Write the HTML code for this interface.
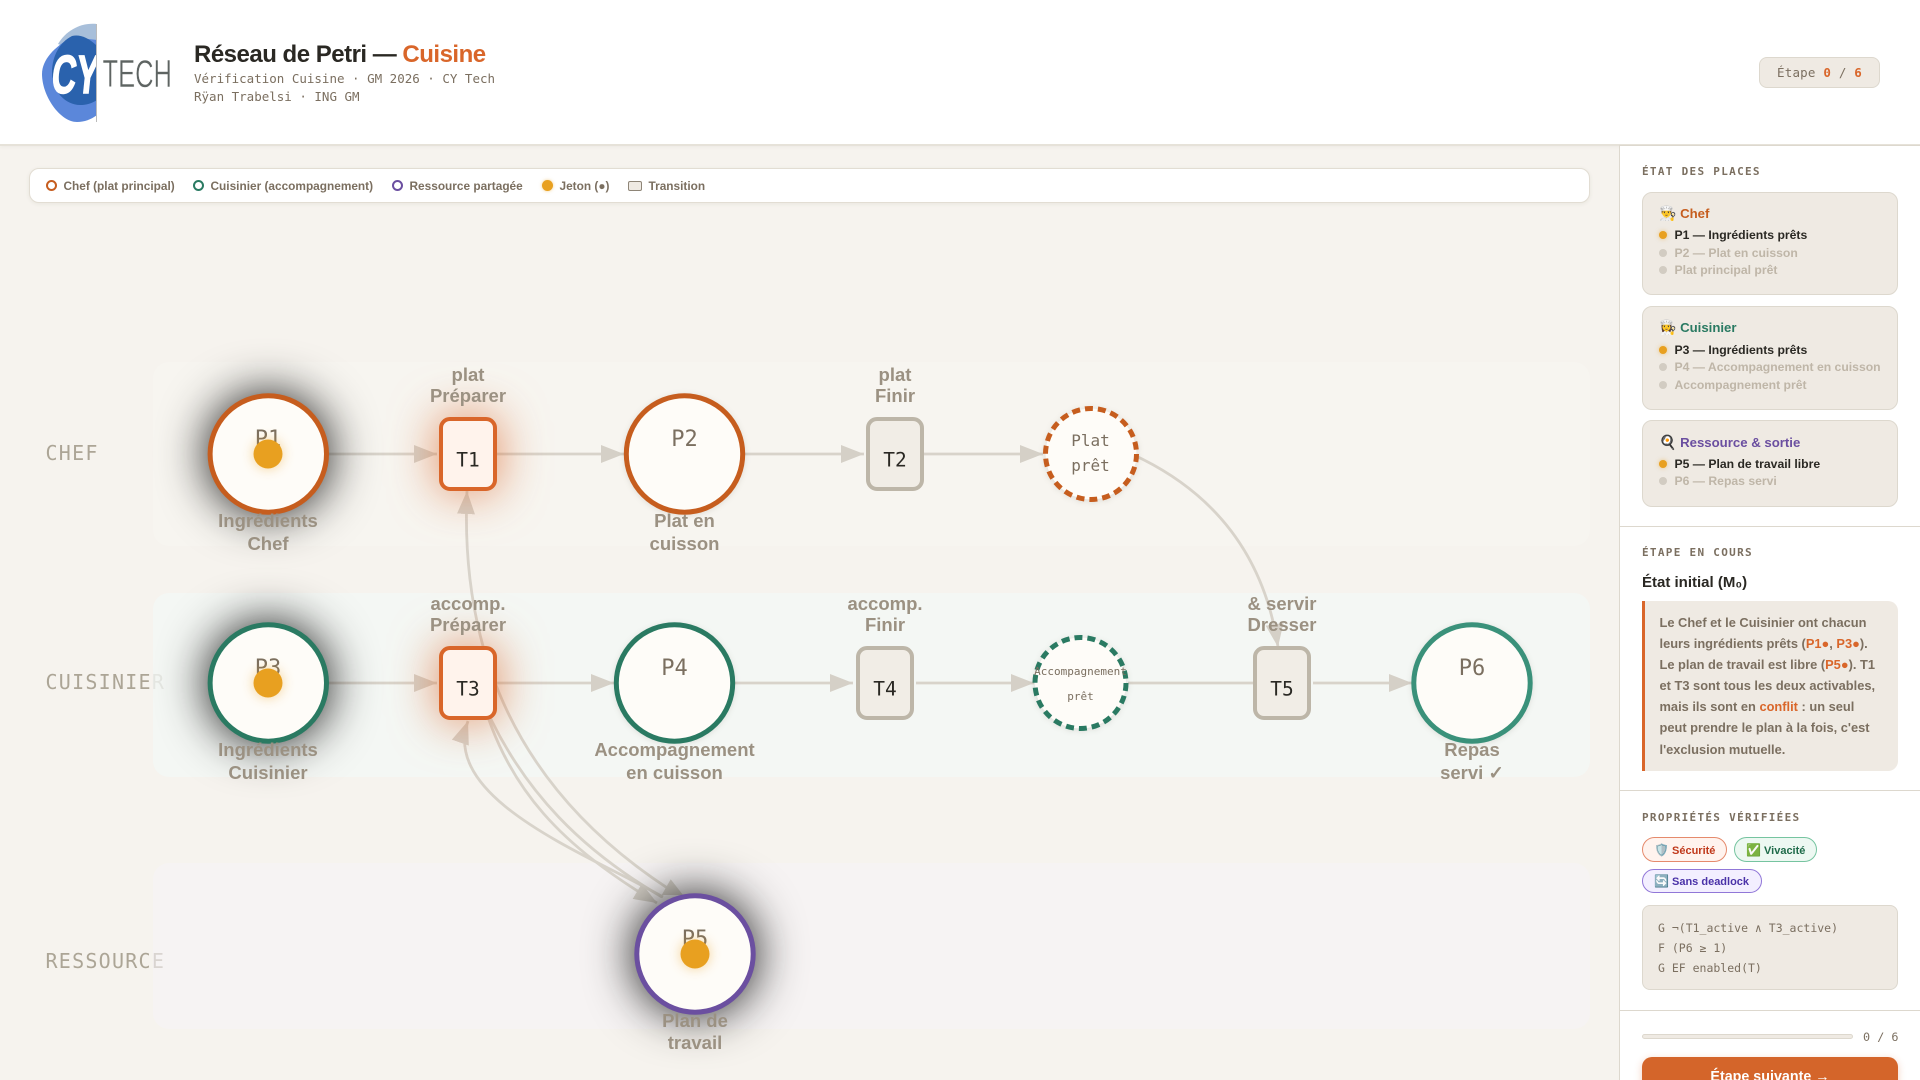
<!DOCTYPE html>
<html lang="fr"><head><meta charset="utf-8"><title>Réseau de Petri — Cuisine</title>
<style>
*{box-sizing:border-box;margin:0;padding:0}
html,body{width:1920px;height:1080px;overflow:hidden;background:#f6f3ee;font-family:"Liberation Sans",sans-serif}
#root{position:relative;width:1920px;height:1080px;overflow:hidden}
.a{position:absolute;white-space:nowrap}
.m{font-family:"DejaVu Sans Mono","Liberation Mono",monospace}
#hd{left:0;top:0;width:1920px;height:146px;background:#fff;border-bottom:2px solid #e6e2d9;box-shadow:0 1px 4px rgba(60,50,30,.05)}
#sb{left:1619px;top:145px;width:301px;height:935px;background:#fff;border-left:1px solid #ddd8ce;border-top:1px solid #ddd8ce}
.h{left:1642px;font:bold 11px "DejaVu Sans Mono",monospace;letter-spacing:1.3px;color:#7b6f60;line-height:14px}
.card{left:1642px;width:256px;background:#efeae3;border:1px solid #ddd8ce;border-radius:10px}
.ct{left:1659px;font:bold 13.2px/16px "Liberation Sans",sans-serif}
.ct i{font-style:normal;font-size:14px}
.ro{left:1674.5px;font:bold 12.2px/14px "Liberation Sans",sans-serif;color:#2a2823}
.off{color:#bfb6a8}
.d{left:1659px;width:8px;height:8px;border-radius:50%;background:#e8a020;box-shadow:0 0 4px rgba(232,160,32,.5)}
.d.o{background:#d2ccc2;box-shadow:none}
.ln{left:1620px;width:300px;height:1px;background:#ddd8ce}
.pill{height:25px;border-radius:13px;border:1px solid;font:bold 11px/25px "Liberation Sans",sans-serif;padding-left:11px}
.pill i{font-style:normal;font-size:12px}
b.o{color:#d9662a}
.lg{top:179px;font:bold 11.85px/14px "Liberation Sans",sans-serif;color:#7b6f60}
.rg{top:180px;width:11px;height:11px;border-radius:50%;border:2px solid}
text{white-space:pre}
.lb{font:bold 18.5px "Liberation Sans",sans-serif;fill:#9b9182;text-anchor:middle}
.pn{font:22px "DejaVu Sans Mono",monospace;fill:#7b6f60;text-anchor:middle}
.tn{font:19.5px "DejaVu Sans Mono",monospace;fill:#2a2823;text-anchor:middle}
.rl{font:20px "DejaVu Sans Mono",monospace;fill:#aca596;letter-spacing:1.25px}
.ar{fill:none;stroke:#d8d3ca;stroke-width:2.8}
.hd{fill:#d5d0c7}
.pl{fill:#fefcf8}
.tk{fill:#e8a020;filter:drop-shadow(0 0 6px rgba(232,160,32,.45))}
.gd{filter:drop-shadow(0 0 24px rgba(20,20,20,1))}
.gt{filter:drop-shadow(0 0 24px rgba(217,102,42,.75))}
.sf{filter:drop-shadow(0 1px 3px rgba(60,50,30,.12))}
</style></head><body><div id="root">

<svg class="a" style="left:0;top:147px" width="1619" height="933" viewBox="0 147 1619 933">
<defs><marker id="h" markerUnits="userSpaceOnUse" markerWidth="24" markerHeight="20" refX="23" refY="9" orient="auto"><path class="hd" d="M0,0L23,9L0,18Z"/></marker></defs>
<text class="rl" x="45.5" y="460">CHEF</text>
<text class="rl" x="45.5" y="689">CUISINIER</text>
<text class="rl" x="45.5" y="968">RESSOURCE</text>
<rect x="153" y="362" width="1437" height="184" rx="16" fill="#f8f5f1" opacity=".7"/>
<rect x="153" y="593" width="1437" height="184" rx="16" fill="#f4f7f5" opacity=".8"/>
<rect x="153" y="863" width="1437" height="166" rx="16" fill="#f6f3f6" opacity=".6"/>

<g class="ar">
<path d="M328,454H437" marker-end="url(#h)"/>
<path d="M497,454H624" marker-end="url(#h)"/>
<path d="M745,454H864" marker-end="url(#h)"/>
<path d="M924,454H1043" marker-end="url(#h)"/>
<path d="M1138,457Q1258,515 1278,647" marker-end="url(#h)"/>
<path d="M328,683H437" marker-end="url(#h)"/>
<path d="M497,683H614" marker-end="url(#h)"/>
<path d="M735,683H853" marker-end="url(#h)"/>
<path d="M916,683H1034" marker-end="url(#h)"/>
<path d="M1128,683H1254"/>
<path d="M1313,683H1412" marker-end="url(#h)"/>
<path d="M672,891C515,790 460,650 467,491" marker-end="url(#h)"/>
<path d="M663,897C590,855 440,800 468,721" marker-end="url(#h)"/>
<path d="M480,690C505,790 565,848 657,903" marker-end="url(#h)"/>
<path d="M478,690C520,795 590,855 662,897"/>
</g>
<path class="hd" d="M661.7,895L670.7,879.3L683,895Z"/>

<g class="gd"><circle class="pl" cx="268.3" cy="454" r="58.2" stroke="#c65d1e" stroke-width="5"/></g>
<g class="gd"><circle class="pl" cx="268.3" cy="683" r="58.2" stroke="#2a7a62" stroke-width="5"/></g>
<g class="gd"><circle class="pl" cx="695" cy="954" r="58.2" stroke="#6b4fa0" stroke-width="5"/></g>
<g class="sf">
<circle class="pl" cx="684.5" cy="454" r="58.2" stroke="#c65d1e" stroke-width="5"/>
<circle class="pl" cx="674.5" cy="683" r="58.2" stroke="#2a7a62" stroke-width="5"/>
<circle class="pl" cx="1472" cy="683" r="58.2" stroke="#3a917a" stroke-width="5"/>
<circle class="pl" cx="1091" cy="454" r="45.5" stroke="#c65d1e" stroke-width="5" stroke-dasharray="8 5"/>
<circle class="pl" cx="1080.5" cy="683" r="45.5" stroke="#2a7a62" stroke-width="5" stroke-dasharray="8 5"/>
</g>
<g class="gt"><rect x="441" y="419" width="54" height="70" rx="9" fill="#fff3ec" stroke="#d9662a" stroke-width="4"/></g>
<g class="gt"><rect x="441" y="648" width="54" height="70" rx="9" fill="#fff3ec" stroke="#d9662a" stroke-width="4"/></g>
<g fill="#f1ede6" stroke="#bdb6a8" stroke-width="4">
<rect x="868" y="419" width="54" height="70" rx="9"/>
<rect x="858" y="648" width="54" height="70" rx="9"/>
<rect x="1255" y="648" width="54" height="70" rx="9"/>
</g>

<text class="pn" x="268" y="446">P1</text>
<text class="pn" x="684.5" y="446">P2</text>
<text class="pn" x="268" y="675">P3</text>
<text class="pn" x="674.5" y="675">P4</text>
<text class="pn" x="1472" y="675">P6</text>
<text class="pn" x="695" y="946">P5</text>
<text class="tn" x="468" y="466.5">T1</text>
<text class="tn" x="895" y="466.5">T2</text>
<text class="tn" x="468" y="695.5">T3</text>
<text class="tn" x="885" y="695.5">T4</text>
<text class="tn" x="1282" y="695.5">T5</text>
<g font-family="DejaVu Sans Mono" fill="#7b6f60" text-anchor="middle">
<text x="1090.5" y="446" font-size="16">Plat</text><text x="1090.5" y="471" font-size="16">prêt</text>
<text x="1080.5" y="675" font-size="11">Accompagnement</text><text x="1080.5" y="700" font-size="11">prêt</text>
</g>
<circle class="tk" cx="268" cy="454" r="14.5"/>
<circle class="tk" cx="268" cy="683" r="14.5"/>
<circle class="tk" cx="695" cy="954" r="14.5"/>

<g class="lb">
<text x="268" y="527">Ingrédients</text><text x="268" y="550">Chef</text>
<text x="684.5" y="527">Plat en</text><text x="684.5" y="550">cuisson</text>
<text x="268" y="756">Ingrédients</text><text x="268" y="779">Cuisinier</text>
<text x="674.5" y="756">Accompagnement</text><text x="674.5" y="779">en cuisson</text>
<text x="1472" y="756">Repas</text><text x="1472" y="779">servi ✓</text>
<text x="695" y="1027">Plan de</text><text x="695" y="1049">travail</text>
<text x="468" y="381">plat</text><text x="468" y="402">Préparer</text>
<text x="895" y="381">plat</text><text x="895" y="402">Finir</text>
<text x="468" y="610">accomp.</text><text x="468" y="631">Préparer</text>
<text x="885" y="610">accomp.</text><text x="885" y="631">Finir</text>
<text x="1282" y="610">&amp; servir</text><text x="1282" y="631">Dresser</text>
</g>
</svg>

<div id="hd" class="a"></div>
<svg class="a" style="left:0;top:0" width="190" height="145" viewBox="0 0 190 145">
<defs><clipPath id="cl"><rect x="0" y="0" width="96" height="145"/></clipPath></defs>
<g clip-path="url(#cl)">
<path d="M97,24C82,22 66,30 58,44L97,60Z" fill="#a8bfda"/>
<path d="M72,37C54,47 42,60 42,74C42,96 60,122 77,122C85,122 92,119 97,115L97,40Z" fill="#5b87da"/>
<path d="M97,46C89,38 80,34 72,36C60,42 52,56 52,72C52,92 66,105 80,105C87,105 92,103 97,100Z" fill="#2a62ad"/>
<text transform="skewX(-6)" x="60" y="93" font-family="Liberation Sans" font-weight="bold" font-size="54" fill="#fff" stroke="#fff" stroke-width="1.4" textLength="47" lengthAdjust="spacingAndGlyphs">CY</text>
</g>
<rect x="96" y="24" width="1" height="98" fill="#bbb"/>
<text x="102.5" y="87" font-family="Liberation Sans" font-size="39" fill="#5e6462" stroke="#fff" stroke-width=".5" textLength="69.5" lengthAdjust="spacingAndGlyphs">TECH</text>
</svg>
<div class="a" style="left:194px;top:39.5px;font:bold 24px/30px 'Liberation Sans',sans-serif;letter-spacing:-.5px;color:#2a2823">Réseau de Petri — <span style="color:#d9662a">Cuisine</span></div>
<div class="a m" style="left:194px;top:70px;font-size:12.5px;line-height:18px;color:#7b6f60">Vérification Cuisine · GM 2026 · CY Tech<br>Rÿan Trabelsi · ING GM</div>
<div class="a m" style="left:1759px;top:57px;width:121px;height:31px;background:#efeae3;border:1px solid #ddd8ce;border-radius:8px;font-size:12.5px;line-height:29px;color:#7b6f60;padding-left:17px;letter-spacing:.2px">Étape <b class="o">0</b> / <b class="o">6</b></div>

<div class="a" style="left:29px;top:168px;width:1561px;height:35px;background:#fff;border:1px solid #e2ddd3;border-radius:10px;box-shadow:0 1px 4px rgba(60,50,30,.07)"></div>
<div class="a rg" style="left:46px;border-color:#c65d1e"></div><div class="a lg" style="left:63.5px">Chef (plat principal)</div>
<div class="a rg" style="left:193px;border-color:#2a7a62"></div><div class="a lg" style="left:210.5px">Cuisinier (accompagnement)</div>
<div class="a rg" style="left:392px;border-color:#6b4fa0"></div><div class="a lg" style="left:409.5px">Ressource partagée</div>
<div class="a rg" style="left:542px;border:0;background:#e8a020;box-shadow:0 0 3px rgba(232,160,32,.5)"></div><div class="a lg" style="left:559.5px">Jeton (●)</div>
<div class="a" style="left:628px;top:181px;width:14px;height:10px;background:#efeae3;border:1.5px solid #8e8577;border-radius:2px"></div><div class="a lg" style="left:648.5px">Transition</div>

<div id="sb" class="a"></div>
<div class="a h" style="top:165px">ÉTAT DES PLACES</div>
<div class="a card" style="top:192px;height:103px"></div>
<div class="a ct" style="top:204.5px;color:#c65d1e"><i>👨‍🍳</i> Chef</div>
<div class="a d" style="top:231px"></div><div class="a ro" style="top:228px">P1 — Ingrédients prêts</div>
<div class="a d o" style="top:249px"></div><div class="a ro off" style="top:246px">P2 — Plat en cuisson</div>
<div class="a d o" style="top:266px"></div><div class="a ro off" style="top:263px">Plat principal prêt</div>
<div class="a card" style="top:306px;height:104px"></div>
<div class="a ct" style="top:319px;color:#2a7a62"><i>👩‍🍳</i> Cuisinier</div>
<div class="a d" style="top:346px"></div><div class="a ro" style="top:343px">P3 — Ingrédients prêts</div>
<div class="a d o" style="top:363px"></div><div class="a ro off" style="top:360px">P4 — Accompagnement en cuisson</div>
<div class="a d o" style="top:381px"></div><div class="a ro off" style="top:378px">Accompagnement prêt</div>
<div class="a card" style="top:420px;height:87px"></div>
<div class="a ct" style="top:434px;color:#6b4fa0"><i>🍳</i> Ressource &amp; sortie</div>
<div class="a d" style="top:460px"></div><div class="a ro" style="top:457px">P5 — Plan de travail libre</div>
<div class="a d o" style="top:477px"></div><div class="a ro off" style="top:474px">P6 — Repas servi</div>
<div class="a ln" style="top:526px"></div>

<div class="a h" style="top:546px">ÉTAPE EN COURS</div>
<div class="a" style="left:1642px;top:574px;font:bold 15px/18px 'Liberation Sans',sans-serif;color:#2a2823">État initial (M₀)</div>
<div class="a" style="left:1642px;top:601px;width:256px;height:170px;background:#efeae3;border-left:3px solid #d9662a;border-radius:0 10px 10px 0;padding:11px 0 0 14.5px;font:bold 12.85px/21.1px 'Liberation Sans',sans-serif;color:#7b6f60">Le Chef et le Cuisinier ont chacun<br>leurs ingrédients prêts (<b class="o">P1●</b>, <b class="o">P3●</b>).<br>Le plan de travail est libre (<b class="o">P5●</b>). T1<br>et T3 sont tous les deux activables,<br>mais ils sont en <b class="o">conflit</b> : un seul<br>peut prendre le plan à la fois, c'est<br>l'exclusion mutuelle.</div>
<div class="a ln" style="top:790px"></div>

<div class="a h" style="top:811px">PROPRIÉTÉS VÉRIFIÉES</div>
<div class="a pill" style="left:1642px;top:837px;width:85px;background:#fff3ee;border-color:#e58a6c;color:#c0391b"><i>🛡️</i> Sécurité</div>
<div class="a pill" style="left:1734px;top:837px;width:83px;background:#edf8f2;border-color:#76c4a0;color:#1f6b4a"><i>✅</i> Vivacité</div>
<div class="a pill" style="left:1642px;top:869px;width:120px;height:24px;background:#f3efff;border-color:#9177d8;color:#4a32a8;line-height:23px"><i>🔄</i> Sans deadlock</div>
<div class="a m" style="left:1642px;top:905px;width:256px;height:85px;background:#efeae3;border:1px solid #ddd8ce;border-radius:8px;padding:11.5px 0 0 15px;font-size:11.5px;line-height:20.3px;color:#7b6f60">G ¬(T1_active ∧ T3_active)<br>F (P6 ≥ 1)<br>G EF enabled(T)</div>
<div class="a ln" style="top:1010px"></div>
<div class="a" style="left:1642px;top:1034px;width:211px;height:5px;background:#efeae3;border:1px solid #ddd8ce;border-radius:3px"></div>
<div class="a m" style="left:1863px;top:1029px;font-size:11.8px;line-height:16px;color:#7b6f60">0 / 6</div>
<div class="a" style="left:1642px;top:1057px;width:256px;height:44px;background:#d4652a;border-radius:10px;box-shadow:0 2px 8px rgba(212,101,42,.3);color:#fff;font:bold 14.3px/41px 'Liberation Sans',sans-serif;text-align:center">Étape suivante →</div>
</div></body></html>
